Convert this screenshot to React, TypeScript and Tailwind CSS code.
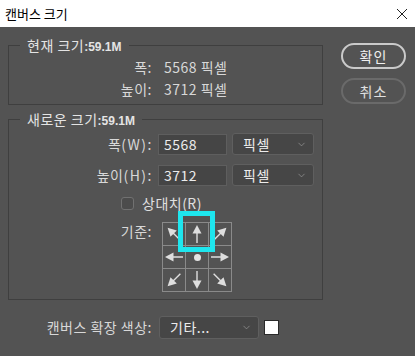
import React from "react";
import { ChevronDown } from "lucide-react";

const font = {
  fontFamily: '"Noto Sans CJK KR", "Noto Sans", "Liberation Sans", sans-serif',
};

const Arrow = ({ className }: { className: string }) => (
  <svg width="22" height="22" viewBox="0 0 22 22" className={className}>
    <line x1="11" y1="20" x2="11" y2="9" stroke="#dedede" strokeWidth="1.4" />
    <polygon points="11,2 6.5,10.5 15.5,10.5" fill="#dedede" />
  </svg>
);

const Select = ({ label, width }: { label: string; width: string }) => (
  <div
    className={`${width} h-[22px] flex items-center justify-between pl-[10px] pr-[6px] rounded-[3px] border border-[#5f5f5f] bg-[#464646] text-[14px] tracking-[0.5px] text-[#ececec]`}
  >
    <span>{label}</span>
    <ChevronDown size={11} strokeWidth={1.5} color="#9a9a9a" />
  </div>
);

const Legend = ({ title }: { title: string }) => (
  <legend className="ml-[11px] px-[7px] h-[18px] leading-[18px] text-[14px] tracking-[0.5px] text-[#e4e4e4]">
    {title}
    <span
      className="text-[12px] font-semibold tracking-normal"
      style={{ fontFamily: '"Liberation Sans", sans-serif' }}
    >
      :59.1M
    </span>
  </legend>
);

export default function App() {
  const cells = [
    "-rotate-45",
    "rotate-0",
    "rotate-45",
    "-rotate-90",
    "dot",
    "rotate-90",
    "-rotate-135",
    "rotate-180",
    "rotate-135",
  ];

  return (
    <div className="w-[415px] h-[356px] bg-[#535353] flex flex-col overflow-hidden" style={font}>
      <div className="h-[27px] bg-white flex items-center justify-between pl-[5px] pr-[7px] shrink-0">
        <span className="text-[13px] text-black">캔버스 크기</span>
        <svg width="12" height="12" viewBox="0 0 12 12">
          <path d="M1 1 L11 11 M11 1 L1 11" stroke="#222" strokeWidth="1" />
        </svg>
      </div>

      <div className="flex pl-[8px]">
        <div className="w-[315px] flex flex-col">
          <fieldset className="mt-[9px] border border-[#3f3f3f] pb-[4px]">
            <Legend title="현재 크기" />
            <div className="flex flex-col text-[14px] tracking-[0.5px] text-[#d8d8d8] pt-[2px]">
              <div className="flex items-center h-[22px]">
                <span className="w-[143px] text-right">폭:</span>
                <span className="ml-[12px]">5568 픽셀</span>
              </div>
              <div className="flex items-center h-[22px]">
                <span className="w-[143px] text-right">높이:</span>
                <span className="ml-[12px]">3712 픽셀</span>
              </div>
            </div>
          </fieldset>

          <fieldset className="mt-[5px] border border-[#3f3f3f] pb-[7px]">
            <Legend title="새로운 크기" />
            <div className="flex flex-col text-[14px] tracking-[0.5px] text-[#d8d8d8] pt-[5px]">
              <div className="flex items-center h-[22px]">
                <span className="w-[143px] text-right">
                  폭<span className="tracking-[1.5px]">(W)</span>:
                </span>
                <div className="ml-[6px] w-[69px] h-[21px] border border-[#5e5e5e] bg-[#454545] pl-[5px] flex items-center text-[#ececec]">
                  5568
                </div>
                <div className="ml-[5px]">
                  <Select label="픽셀" width="w-[82px]" />
                </div>
              </div>
              <div className="flex items-center h-[22px] mt-[9px]">
                <span className="w-[143px] text-right">
                  높이<span className="tracking-[1.5px]">(H)</span>:
                </span>
                <div className="ml-[6px] w-[69px] h-[21px] border border-[#5e5e5e] bg-[#454545] pl-[5px] flex items-center text-[#ececec]">
                  3712
                </div>
                <div className="ml-[5px]">
                  <Select label="픽셀" width="w-[82px]" />
                </div>
              </div>
              <div className="flex items-center h-[22px] mt-[6px] pl-[112px]">
                <div className="w-[13px] h-[13px] rounded-[3px] border border-[#717171] bg-[#4c4c4c]" />
                <span className="ml-[8px] text-[#e0e0e0]">상대치(R)</span>
              </div>
              <div className="flex items-start mt-[8px]">
                <span className="w-[143px] text-right leading-[18px]">기준:</span>
                <div className="relative ml-[10px]">
                  <div className="grid grid-cols-3 gap-px bg-[#8a8a8a] p-px w-[70px] h-[70px]">
                    {cells.map((c, i) => (
                      <div key={i} className="bg-[#535353] flex items-center justify-center">
                        {c === "dot" ? (
                          <div className="w-[7px] h-[7px] rounded-full bg-[#e4e4e4]" />
                        ) : (
                          <Arrow className={c} />
                        )}
                      </div>
                    ))}
                  </div>
                  <div className="absolute left-[16px] top-[-11px] w-[37px] h-[41px] border-[5px] border-[#1ee6ee]" />
                </div>
              </div>
            </div>
          </fieldset>

          <div className="flex items-center mt-[16px] text-[14px] tracking-[0.5px] text-[#d8d8d8]">
            <span className="w-[144px] text-right">캔버스 확장 색상:</span>
            <div className="ml-[7px]">
              <div className="w-[100px] h-[23px] flex items-center justify-between pl-[10px] pr-[6px] rounded-[3px] border border-[#5f5f5f] bg-[#464646] text-[14px] text-[#ececec]">
                <span>기타...</span>
                <ChevronDown size={11} strokeWidth={1.5} color="#9a9a9a" />
              </div>
            </div>
            <div className="ml-[5px] w-[15px] h-[15px] bg-white border border-[#2a2a2a]" />
          </div>
        </div>

        <div className="ml-[18px] mt-[16px] flex flex-col gap-[9px]">
          <button className="w-[65px] h-[26px] rounded-full border-2 border-[#cacaca] text-[14px] tracking-[1px] text-[#f0f0f0]">
            확인
          </button>
          <button className="w-[65px] h-[26px] rounded-full border-2 border-[#6a6a6a] text-[14px] tracking-[1px] text-[#e0e0e0]">
            취소
          </button>
        </div>
      </div>
    </div>
  );
}
